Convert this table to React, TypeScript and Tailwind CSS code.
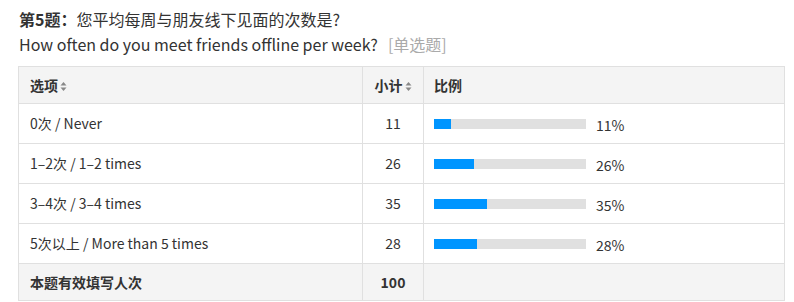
import React from 'react';

const rows = [
  { label: '0次 / Never', count: 11, pct: 11 },
  { label: '1–2次 / 1–2 times', count: 26, pct: 26 },
  { label: '3–4次 / 3–4 times', count: 35, pct: 35 },
  { label: '5次以上 / More than 5 times', count: 28, pct: 28 },
];

const SortIcon = () => (
  <svg width="7" height="11" viewBox="0 0 7 11" className="inline-block ml-[2px] align-[-1px]">
    <path d="M3.5 1 L6.5 4.6 L0.5 4.6 Z" fill="#888" />
    <path d="M3.5 10 L6.5 6.4 L0.5 6.4 Z" fill="#888" />
  </svg>
);

const App = () => {
  return (
    <div
      className="w-[794px] h-[302px] bg-white text-[#333] px-[19px] pt-[7px]"
      style={{ fontFamily: '"Noto Sans CJK SC", "Noto Sans", sans-serif' }}
    >
      <div className="text-[16px] leading-[25px]">
        <div>
          <span className="font-bold">第5题：</span>您平均每周与朋友线下见面的次数是?
        </div>
        <div>
          How often do you meet friends offline per week?
          <span className="text-[#aaa] ml-[10px]">[单选题]</span>
        </div>
      </div>
      <table className="mt-[9px] ml-[-1px] w-[766px] border-collapse text-[14px] table-fixed">
        <colgroup>
          <col className="w-[344px]" />
          <col className="w-[61px]" />
          <col className="w-[361px]" />
        </colgroup>
        <thead>
          <tr className="h-[37px] bg-[#f4f4f4]">
            <th className="border border-[#e0e0e0] text-left font-bold px-[11px]">
              选项<SortIcon />
            </th>
            <th className="border border-[#e0e0e0] text-center font-bold">
              小计<SortIcon />
            </th>
            <th className="border border-[#e0e0e0] text-left font-bold px-[10px]">比例</th>
          </tr>
        </thead>
        <tbody>
          {rows.map((r) => (
            <tr key={r.label} className="h-[40px]">
              <td className="border border-[#e0e0e0] px-[11px]">{r.label}</td>
              <td className="border border-[#e0e0e0] text-center">{r.count}</td>
              <td className="border border-[#e0e0e0] px-[10px]">
                <div className="flex items-center">
                  <div className="w-[152px] h-[10px] bg-[#e0e0e0]">
                    <div className="h-full bg-[#0095ff]" style={{ width: `${r.pct}%` }} />
                  </div>
                  <span className="ml-[10px] mt-[4px]">{r.pct}%</span>
                </div>
              </td>
            </tr>
          ))}
          <tr className="h-[37px] bg-[#f4f4f4]">
            <td className="border border-[#e0e0e0] px-[11px] font-bold">本题有效填写人次</td>
            <td className="border border-[#e0e0e0] text-center font-bold">100</td>
            <td className="border border-[#e0e0e0]"></td>
          </tr>
        </tbody>
      </table>
    </div>
  );
};

export default App;
